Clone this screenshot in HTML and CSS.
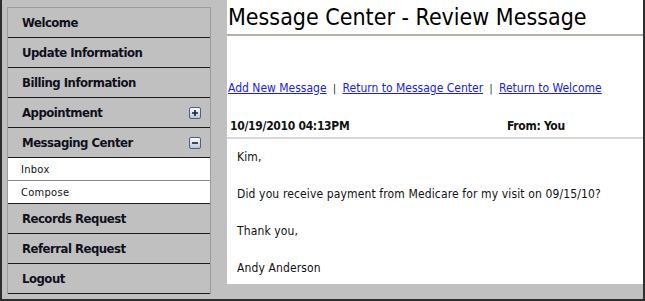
FILE: index.html
```html
<!DOCTYPE html>
<html lang="en">
<head>
    <meta charset="UTF-8">
    <title>Message Center - Review Message</title>
    <link rel="stylesheet" href="styles.css">
</head>
<body>
    <div class="frame">
        <nav class="menu">
            <a class="item" href="#">Welcome</a>
            <a class="item" href="#">Update Information</a>
            <a class="item" href="#">Billing Information</a>
            <a class="item" href="#">Appointment
                <svg class="toggle" width="12" height="12" viewBox="0 0 12 12">
                    <defs>
                        <linearGradient id="boxfill" x1="0" y1="0" x2="0" y2="1">
                            <stop offset="0" stop-color="#ffffff"/>
                            <stop offset="1" stop-color="#b9c3d6"/>
                        </linearGradient>
                    </defs>
                    <rect x="0.5" y="0.5" width="11" height="11" rx="1.5" fill="url(#boxfill)" stroke="#4d5f86"/>
                    <path d="M3 6h6M6 3v6" stroke="#1b2233" stroke-width="1.6"/>
                </svg>
            </a>
            <a class="item" href="#">Messaging Center
                <svg class="toggle" width="12" height="12" viewBox="0 0 12 12">
                    <rect x="0.5" y="0.5" width="11" height="11" rx="1.5" fill="url(#boxfill)" stroke="#4d5f86"/>
                    <path d="M3 6h6" stroke="#1b2233" stroke-width="1.6"/>
                </svg>
            </a>
            <a class="sub" href="#">Inbox</a>
            <a class="sub last" href="#">Compose</a>
            <a class="item" href="#">Records Request</a>
            <a class="item" href="#">Referral Request</a>
            <a class="item" href="#">Logout</a>
        </nav>

        <main class="content">
            <h1>Message Center - Review Message</h1>

            <div class="links">
                <a href="#">Add New Message</a> <span class="sep">|</span>
                <a href="#">Return to Message Center</a> <span class="sep">|</span>
                <a href="#">Return to Welcome</a>
            </div>

            <div class="meta">
                <span class="date">10/19/2010 04:13PM</span>
                <span class="from">From: You</span>
            </div>

            <div class="message">
                <p>Kim,</p>
                <p>Did you receive payment from Medicare for my visit on 09/15/10?</p>
                <p>Thank you,</p>
                <p>Andy Anderson</p>
            </div>
        </main>
    </div>
</body>
</html>
```

FILE: styles.css
```css
body {
    margin: 0;
    background-color: #c0c0c0;
    font-family: "DejaVu Sans Condensed", "DejaVu Sans", sans-serif;
    color: #111;
}
.frame {
    display: flex;
    align-items: flex-start;
    height: 299px;
    border: 2px solid #2e2e2e;
    border-top: none;
}

/* left navigation */
.menu {
    display: flex;
    flex-direction: column;
    width: 202px;
    margin: 7px 0 0 5px;
    border: 1px solid #9c9c9c;
    border-bottom: none;
}
.item {
    display: flex;
    align-items: center;
    justify-content: space-between;
    height: 29px;
    padding: 0 9px 0 14px;
    border-bottom: 1px solid #1c1c1c;
    font-size: 13px;
    font-weight: bold;
    letter-spacing: -0.5px;
    color: #10101c;
    text-decoration: none;
}
.toggle {
    display: block;
}
.sub {
    display: flex;
    align-items: center;
    height: 22px;
    padding-left: 13px;
    background: #fff;
    border-bottom: 1px solid #8a8a8a;
    font-size: 11px;
    letter-spacing: 0.3px;
    color: #10101c;
    text-decoration: none;
}
.sub.last {
    border-bottom-color: #1c1c1c;
}

/* message area */
.content {
    flex: 1;
    height: 284px;
    margin-left: 16px;
    background: #fff;
}
h1 {
    margin: 0;
    padding: 4px 0 4px 1px;
    font-size: 23px;
    font-weight: normal;
    color: #000;
    border-bottom: 2px solid #b2b2a4;
}
.links {
    margin-top: 45px;
    padding-left: 1px;
    font-size: 12px;
}
.links a {
    color: #1a22d8;
}
.sep {
    margin: 0 3px;
    font-size: 10px;
}
.meta {
    display: flex;
    margin-top: 24px;
    padding: 0 0 4px 3px;
    border-bottom: 2px solid #d6d6d6;
    font-size: 12px;
    font-weight: bold;
    letter-spacing: -0.3px;
}
.date {
    width: 277px;
}
.message {
    padding: 11px 0 0 10px;
    font-size: 12px;
    letter-spacing: 0.13px;
}
.message p {
    margin: 0 0 22px;
    line-height: 15px;
}
```
